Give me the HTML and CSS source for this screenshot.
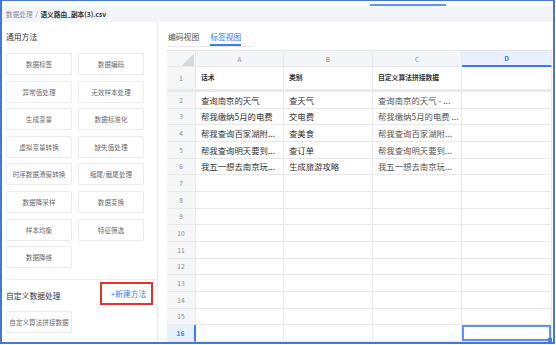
FILE: index.html
```html
<!DOCTYPE html>
<html lang="zh-CN">
<head>
<meta charset="utf-8">
<title>数据处理</title>
<link rel="stylesheet" href="styles.css">
</head>
<body>
<div class="frame">
  <div class="topstrip"><span class="top-ind"></span></div>
  <div class="crumb">
    <span class="crumb-parent">数据处理</span><span class="crumb-sep">/</span><span class="crumb-cur">语义路由_副本(3).csv</span>
  </div>
  <div class="main">
    <aside class="side">
      <div class="sec-title">通用方法</div>
      <div class="btn-grid">
        <div class="mbtn">数据标签</div>
        <div class="mbtn">数据编码</div>
        <div class="mbtn">异常值处理</div>
        <div class="mbtn">无效样本处理</div>
        <div class="mbtn">生成变量</div>
        <div class="mbtn">数据标准化</div>
        <div class="mbtn">虚拟变量转换</div>
        <div class="mbtn">缺失值处理</div>
        <div class="mbtn">时序数据滑窗转换</div>
        <div class="mbtn">缩尾/截尾处理</div>
        <div class="mbtn">数据降采样</div>
        <div class="mbtn">数据变换</div>
        <div class="mbtn">样本均衡</div>
        <div class="mbtn">特征筛选</div>
        <div class="mbtn">数据降维</div>
      </div>
      <div class="divider"></div>
      <div class="custom-head">
        <span class="sec-title custom-title">自定义数据处理</span>
        <span class="new-btn">+新建方法</span>
      </div>
      <div class="btn-grid custom-grid">
        <div class="mbtn">自定义算法拼接数据</div>
      </div>
    </aside>
    <section class="content">
      <div class="tabs">
        <span class="tab">编码视图</span>
        <span class="tab active">标签视图</span>
      </div>
      <div class="sheet">
        <div class="hc corner"><span class="tri"></span></div>
        <div class="hc">A</div>
        <div class="hc">B</div>
        <div class="hc">C</div>
        <div class="hc sel-col">D</div>

        <div class="rn r1">1</div>
        <div class="c h1">话术</div>
        <div class="c h1">类别</div>
        <div class="c h1">自定义算法拼接数据</div>
        <div class="c h1"></div>

        <div class="rn">2</div>
        <div class="c">查询南京的天气</div>
        <div class="c">查天气</div>
        <div class="c cc">查询南京的天气 - ...</div>
        <div class="c"></div>

        <div class="rn">3</div>
        <div class="c">帮我缴纳5月的电费</div>
        <div class="c">交电费</div>
        <div class="c cc">帮我缴纳5月的电费 ...</div>
        <div class="c"></div>

        <div class="rn">4</div>
        <div class="c">帮我查询百家湖附...</div>
        <div class="c">查美食</div>
        <div class="c cc">帮我查询百家湖附...</div>
        <div class="c"></div>

        <div class="rn">5</div>
        <div class="c">帮我查询明天要到...</div>
        <div class="c">查订单</div>
        <div class="c cc">帮我查询明天要到...</div>
        <div class="c"></div>

        <div class="rn">6</div>
        <div class="c">我五一想去南京玩...</div>
        <div class="c">生成旅游攻略</div>
        <div class="c cc">我五一想去南京玩...</div>
        <div class="c"></div>

        <div class="rn">7</div><div class="c"></div><div class="c"></div><div class="c"></div><div class="c"></div>
        <div class="rn">8</div><div class="c"></div><div class="c"></div><div class="c"></div><div class="c"></div>
        <div class="rn">9</div><div class="c"></div><div class="c"></div><div class="c"></div><div class="c"></div>
        <div class="rn">10</div><div class="c"></div><div class="c"></div><div class="c"></div><div class="c"></div>
        <div class="rn">11</div><div class="c"></div><div class="c"></div><div class="c"></div><div class="c"></div>
        <div class="rn">12</div><div class="c"></div><div class="c"></div><div class="c"></div><div class="c"></div>
        <div class="rn">13</div><div class="c"></div><div class="c"></div><div class="c"></div><div class="c"></div>
        <div class="rn">14</div><div class="c"></div><div class="c"></div><div class="c"></div><div class="c"></div>
        <div class="rn">15</div><div class="c"></div><div class="c"></div><div class="c"></div><div class="c"></div>
        <div class="rn sel-row">16</div><div class="c"></div><div class="c"></div><div class="c"></div><div class="c sel-cell"><span class="handle"></span></div>
      </div>
    </section>
  </div>
</div>
</body>
</html>
```

FILE: styles.css
```css
* { box-sizing: border-box; }
html, body { margin: 0; padding: 0; background: #fff; }
body {
  font-family: "Noto Sans CJK SC", "Noto Sans", sans-serif;
  color: #333;
}
.frame {
  width: 555px;
  height: 344px;
  border-style: solid;
  border-color: #4677d4;
  border-width: 1px 2px 2px 2px;
  display: flex;
  flex-direction: column;
  overflow: hidden;
}
.topstrip {
  height: 5px;
  display: flex;
  align-items: flex-end;
  padding-left: 368px;
}
.top-ind {
  display: block;
  width: 76px;
  height: 2px;
  background: #5f95f5;
}
.crumb {
  height: 16px;
  background: #f2f4f8;
  padding-left: 4px;
  font-size: 6.7px;
  line-height: 16px;
  white-space: nowrap;
}
.crumb-parent, .crumb-sep { color: #8a8f99; }
.crumb-sep { margin: 0 2.5px; }
.crumb-cur { color: #333; font-weight: 700; }
.main {
  flex: 1;
  display: flex;
  min-height: 0;
}
.side {
  width: 156px;
  border-right: 1px solid #ececec;
  padding-left: 4px;
  display: flex;
  flex-direction: column;
}
.sec-title {
  font-size: 7.8px;
  line-height: 10px;
  color: #333;
  padding-top: 10px;
}
.btn-grid {
  display: grid;
  grid-template-columns: 66px 66px;
  grid-auto-rows: 22px;
  column-gap: 6px;
  row-gap: 5.6px;
  margin-top: 11px;
}
.mbtn {
  border: 1px solid #ebebeb;
  border-radius: 2px;
  font-size: 6.6px;
  color: #6a6a6a;
  display: flex;
  align-items: center;
  justify-content: center;
  white-space: nowrap;
}
.divider {
  height: 1px;
  background: #eeeeee;
  margin-top: 11px;
}
.custom-head {
  display: flex;
  justify-content: space-between;
  align-items: center;
  margin-top: 2px;
  padding-right: 4px;
}
.custom-title { padding-top: 5px; }
.new-btn {
  width: 53px;
  height: 23px;
  border: 2px solid #e8302e;
  color: #3b7cf5;
  font-size: 7.8px;
  display: flex;
  align-items: center;
  justify-content: center;
  padding-left: 4px;
}
.custom-grid { margin-top: 6px; }
.content {
  flex: 1;
  padding-left: 9px;
  display: flex;
  flex-direction: column;
}
.tabs {
  display: flex;
  gap: 11px;
  width: 85px;
  padding-left: 1px;
  border-bottom: 1px solid #e8e8e8;
}
.tab {
  font-size: 7.8px;
  line-height: 10px;
  padding-top: 10px;
  padding-bottom: 2px;
  border-bottom: 2px solid transparent;
  color: #555;
  white-space: nowrap;
}
.tab.active {
  color: #3b7cf5;
  border-bottom-color: #3b7cf5;
}
.sheet {
  margin-top: 3px;
  display: grid;
  grid-template-columns: 29px 88px 89px 89px 90px;
  grid-template-rows: 16px 25px repeat(15, 16.67px);
  border-top: 1px solid #e6e6e6;
  width: 385px;
}
.sheet > div {
  border-right: 1px solid #e8e8e8;
  border-bottom: 1px solid #e8e8e8;
  min-width: 0;
  overflow: hidden;
  white-space: nowrap;
}
.hc {
  background: #f3f5f8;
  font-size: 6.6px;
  color: #8a8a8a;
  display: flex;
  align-items: center;
  justify-content: center;
}
.corner {
  background: #f5f6f8;
  align-items: flex-end;
  justify-content: flex-end;
}
.tri {
  display: block;
  width: 13px;
  height: 13px;
  margin-right: 1px;
  background: linear-gradient(to bottom right, transparent 50%, #d6d8dc 50%);
}
.sel-col {
  background: #e8f0fe;
  color: #3b7cf5;
  font-weight: 700;
  border-bottom: 2px solid #3b7cf5 !important;
}
.rn {
  background: #f5f6f8;
  font-size: 6.6px;
  color: #8a8a8a;
  display: flex;
  align-items: center;
  justify-content: center;
}
.rn.r1, .c.h1 {
  border-bottom: 3px solid #e9e9e9 !important;
}
.sel-row {
  background: #e8f0fe;
  color: #3b7cf5;
  font-weight: 700;
  border-right: 2px solid #3b7cf5 !important;
}
.c {
  font-size: 8.4px;
  color: #333;
  padding-left: 5px;
  display: flex;
  align-items: center;
}
.c.cc { color: #555; }
.c.h1 {
  font-size: 6.8px;
  font-weight: 700;
  align-items: flex-start;
  padding-top: 5px;
}
.sel-cell {
  position: relative;
  box-shadow: inset 0 0 0 2px #5a92f7;
  overflow: visible !important;
}
.handle {
  position: absolute;
  right: -1px;
  bottom: -1px;
  width: 4px;
  height: 4px;
  background: #3b7cf5;
}
```
